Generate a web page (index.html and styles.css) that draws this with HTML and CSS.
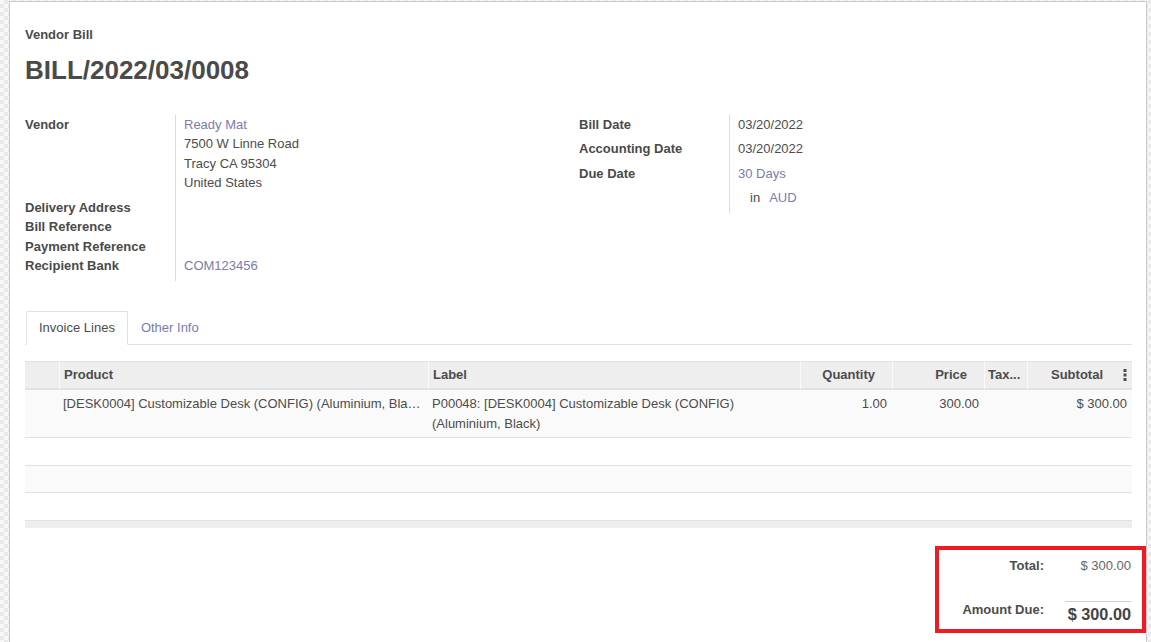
FILE: index.html
```html
<!DOCTYPE html>
<html>
<head>
<meta charset="utf-8">
<link rel="stylesheet" href="styles.css">
</head>
<body>
<div class="sheet">
  <div class="subtitle">Vendor Bill</div>
  <h1 class="title">BILL/2022/03/0008</h1>

  <div class="groups">
    <div class="group">
      <div class="lbl lbl-vendor">Vendor</div>
      <div class="val val-vendor">
        <a class="link">Ready Mat</a>
        <div>7500 W Linne Road</div>
        <div>Tracy CA 95304</div>
        <div>United States</div>
      </div>
      <div class="lbl">Delivery Address</div>
      <div class="val"></div>
      <div class="lbl">Bill Reference</div>
      <div class="val"></div>
      <div class="lbl">Payment Reference</div>
      <div class="val"></div>
      <div class="lbl">Recipient Bank</div>
      <div class="val val-last"><a class="link">COM123456</a></div>
    </div>
    <div class="group group-right">
      <div class="lbl r">Bill Date</div>
      <div class="val r">03/20/2022</div>
      <div class="lbl r">Accounting Date</div>
      <div class="val r">03/20/2022</div>
      <div class="lbl r">Due Date</div>
      <div class="val r"><a class="link">30 Days</a></div>
      <div class="lbl r"></div>
      <div class="val r val-last"><span class="in">in</span><a class="link">AUD</a></div>
    </div>
  </div>

  <ul class="tabs">
    <li class="tab active">Invoice Lines</li>
    <li class="tab"><a class="link">Other Info</a></li>
  </ul>

  <table class="lines">
    <colgroup>
      <col style="width:34px">
      <col style="width:369px">
      <col style="width:372px">
      <col style="width:92px">
      <col style="width:92px">
      <col style="width:43px">
      <col style="width:105px">
    </colgroup>
    <thead>
      <tr>
        <th></th>
        <th>Product</th>
        <th>Label</th>
        <th class="num">Quantity</th>
        <th class="num">Price</th>
        <th class="tax">Tax...</th>
        <th class="num sub"><div class="subwrap"><span>Subtotal</span><svg class="kebab" width="4" height="12" viewBox="0 0 4 12"><rect x="0.5" y="0" width="3" height="3" fill="#4c4c4c"/><rect x="0.5" y="4.5" width="3" height="3" fill="#4c4c4c"/><rect x="0.5" y="9" width="3" height="3" fill="#4c4c4c"/></svg></div></th>
      </tr>
    </thead>
    <tbody>
      <tr>
        <td></td>
        <td class="ell">[DESK0004] Customizable Desk (CONFIG) (Aluminium, Black)</td>
        <td>P00048: [DESK0004] Customizable Desk (CONFIG) (Aluminium, Black)</td>
        <td class="num">1.00</td>
        <td class="num">300.00</td>
        <td></td>
        <td class="num">$ 300.00</td>
      </tr>
      <tr class="empty"><td colspan="7"></td></tr>
      <tr class="empty"><td colspan="7"></td></tr>
      <tr class="empty"><td colspan="7"></td></tr>
    </tbody>
    <tfoot>
      <tr><td colspan="7"></td></tr>
    </tfoot>
  </table>

  <div class="totals">
    <div class="tgrid">
      <div class="tl">Total:</div>
      <div class="tv">$ 300.00</div>
      <div class="tl due-l">Amount Due:</div>
      <div class="tv due-v">$ 300.00</div>
    </div>
  </div>
</div>
<div class="highlight"></div>
</body>
</html>
```

FILE: styles.css
```css
html, body {
  margin: 0;
  padding: 0;
}
body {
  font-family: "Liberation Sans", Arial, sans-serif;
  font-size: 13px;
  line-height: 19.5px;
  color: #4c4c4c;
  background-color: #f2f2f2;
  background-image: conic-gradient(#e9e9e9 25%, #f7f7f7 0 50%, #e9e9e9 0 75%, #f7f7f7 0);
  background-size: 8px 8px;
  height: 642px;
  overflow: hidden;
  position: relative;
}
.sheet {
  margin: 1px 0 0 9px;
  width: 1138px;
  box-sizing: border-box;
  min-height: 700px;
  background: #fff;
  border: 1px solid #c8c8d0;
  border-bottom: none;
  padding: 23px 14px 0 15px;
}
.subtitle {
  font-weight: bold;
}
.title {
  margin: 10px 0 0 0;
  font-size: 26px;
  line-height: 31.2px;
  font-weight: bold;
  color: #4a4a4a;
}
.link {
  color: #7c7bad;
  text-decoration: none;
}
.groups {
  margin-top: 29px;
  display: grid;
  grid-template-columns: 1fr 1fr;
  gap: 0 1px;
}
.group {
  display: grid;
  grid-template-columns: 150px 1fr;
  align-content: start;
}
.lbl {
  font-weight: bold;
  color: #4a4a4a;
}
.val {
  border-left: 1px solid #dcdcdc;
  padding-left: 8px;
  min-height: 19.5px;
}
.val-vendor {
  padding-bottom: 5px;
}
.val-last {
  padding-bottom: 5px;
}
.lbl-vendor {
  padding-bottom: 5px;
}
.lbl.r, .val.r {
  padding-bottom: 5px;
}
.in {
  margin-left: 12px;
  margin-right: 9px;
}
.tabs {
  list-style: none;
  margin: 30.5px 0 0 0;
  padding: 0;
  display: flex;
  border-bottom: 1px solid #dee2e6;
}
.tab {
  padding: 6px 12px;
  border: 1px solid transparent;
  margin-bottom: -1px;
  margin-left: 1px;
}
.tab + .tab {
  margin-left: 0;
}
.tab.active {
  border-color: #dee2e6 #dee2e6 #fff;
  border-radius: 2px 2px 0 0;
  background: #fff;
}
.lines {
  margin-top: 16px;
  width: 100%;
  table-layout: fixed;
  border-collapse: separate;
  border-spacing: 0;
}
.lines th {
  background: #eeeeee;
  font-weight: bold;
  text-align: left;
  padding: 3.5px 4px;
  border-top: 1px solid #dee2e6;
  border-bottom: 2px solid #dee2e6;
  white-space: nowrap;
  overflow: hidden;
}
.lines th + th {
  border-left: 1px solid #fafafa;
}
.lines th.num {
  text-align: right;
  padding-right: 17px;
}
.lines th.sub {
  padding-right: 5px;
}
.lines th.tax {
  padding-right: 1px;
  padding-left: 3px;
}
.subwrap {
  display: flex;
  justify-content: flex-end;
  align-items: center;
  gap: 20px;
}
.kebab {
  display: block;
}
.ell {
  overflow: hidden;
  text-overflow: ellipsis;
  white-space: nowrap;
}
.lines td {
  padding: 4px;
  border-bottom: 1px solid #dee2e6;
  vertical-align: top;
}
.lines td.num {
  text-align: right;
  padding-right: 5px;
}
.lines tbody tr:nth-child(odd) td {
  background: #fafafa;
}
.lines tr.empty td {
  height: 27.5px;
  padding: 0;
  box-sizing: border-box;
}
.lines tfoot td {
  background: #eeeeee;
  height: 7px;
  padding: 0;
  border-bottom: none;
}
.totals {
  display: flex;
  justify-content: flex-end;
  margin-top: 28.5px;
  padding-right: 1px;
}
.tgrid {
  display: grid;
  grid-template-columns: auto 66px;
  column-gap: 21px;
  align-items: start;
}
.tl {
  font-weight: bold;
  text-align: right;
}
.tv {
  text-align: right;
  color: #666;
}
.due-l {
  margin-top: 24.5px;
}
.due-v {
  margin-top: 25.25px;
  border-top: 1px solid #cfcfcf;
  padding-top: 1px;
  font-size: 16.25px;
  line-height: 22px;
  font-weight: bold;
  color: #444;
  white-space: nowrap;
}
.highlight {
  position: absolute;
  left: 935px;
  top: 546px;
  width: 211px;
  height: 87px;
  box-sizing: border-box;
  border: 4px solid #ed1c24;
}
```
